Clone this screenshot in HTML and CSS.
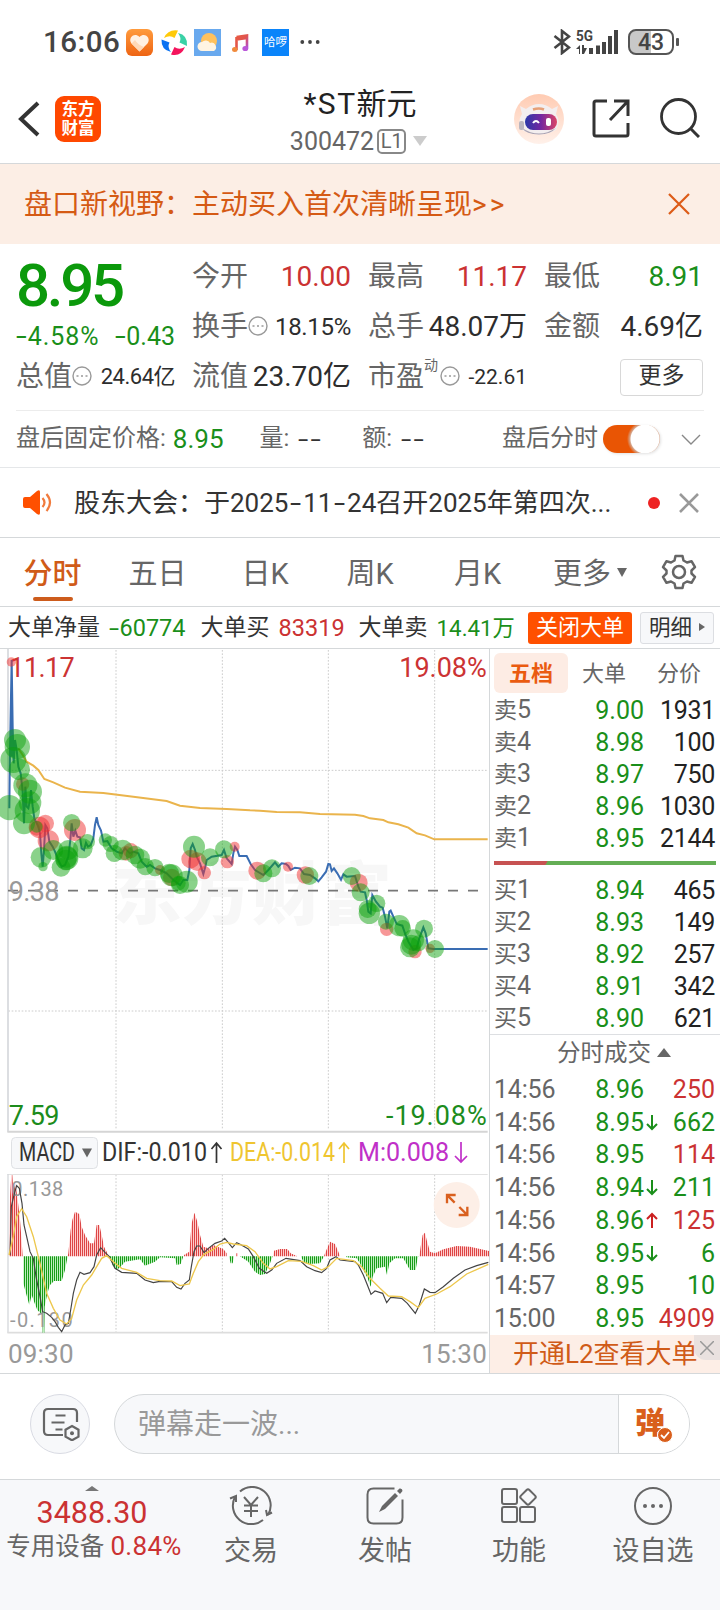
FILE: index.html
```html
<!DOCTYPE html>
<html lang="zh-CN">
<head>
<meta charset="utf-8">
<title>*ST新元 300472</title>
<link rel="stylesheet" href="styles.css">
</head>
<body>
<div class="app">
  <div class="status">
    <span class="clock">16:06</span>
    <svg class="app-ic" viewBox="0 0 27 27"><defs><linearGradient id="heart" x1="0" y1="0" x2="0" y2="1"><stop offset="0" stop-color="#ff9b3d"/><stop offset="1" stop-color="#ee6413"/></linearGradient></defs><rect width="27" height="27" rx="6" fill="url(#heart)"/><path d="M13.500 22.500 5.500 14.500C1.500 9.500 8 2.500 13.500 8 19 2.500 25.500 9.500 21.500 14.500Z" fill="#fff1e3"/><path d="M13.500 22.500 5.500 14.500 9 11Q12 16 18 18Z" fill="#ffd9b8"/></svg>
    <svg class="app-ic ml8" viewBox="0 0 27 27"><path d="M3 9Q7 0 17 1.500L13.500 9Q9 5.500 3 9Z" fill="#ffca0a"/><path d="M17 4Q27 6 26 17L18.500 13.500Q21 9 17 4Z" fill="#3ad1a6"/><path d="M24 18Q20 28 10 25.500L13.500 18Q18 21.500 24 18Z" fill="#f4145c"/><path d="M10 23Q0 21 .5 10.500L8.500 13.500Q6 18 10 23Z" fill="#0b72f2"/></svg>
    <svg class="app-ic ml7" viewBox="0 0 27 27"><rect width="27" height="27" fill="#69a9ee"/><circle cx="15" cy="12" r="8" fill="#ffc15c"/><path d="M8 22a4.500 4.500 0 0 1 0-9 5 5 0 0 1 8 1 4.500 4.500 0 0 1 4 8Z" fill="#fff4e2"/></svg>
    <svg class="app-ic ml7" viewBox="0 0 27 27"><defs><linearGradient id="note" x1="0" y1="0" x2="1" y2="1"><stop offset="0" stop-color="#e85a42"/><stop offset=".5" stop-color="#e0544f"/><stop offset="1" stop-color="#a94fe0"/></linearGradient></defs><path d="M9.500 8 20 6.500V19.500M9.500 8V21M9.500 10.500 20 9" fill="none" stroke="url(#note)" stroke-width="2.600"/><ellipse cx="7.800" cy="20.500" rx="2.800" ry="2.500" fill="#f08a3c"/><ellipse cx="18.300" cy="19.500" rx="2.900" ry="2.600" fill="#b957d9"/></svg>
    <span class="hello">哈啰</span>
    <svg class="dots" viewBox="0 0 20 6"><circle cx="2.300" cy="3" r="1.900"/><circle cx="10" cy="3" r="1.900"/><circle cx="17.700" cy="3" r="1.900"/></svg>
    <span class="grow"></span>
    <svg class="bt" viewBox="0 0 18 26"><path d="M1.500 7 16 18.500 9 24V2l7 5.500L1.500 19" fill="none" stroke="#444" stroke-width="2.600"/></svg>
    <svg class="signal" viewBox="0 -4 43 34"><text x="0" y="11.500" font-size="15" font-weight="700" textLength="17" lengthAdjust="spacingAndGlyphs">5G</text><path d="M4 16v9H3v-5H0zM6 16h2v3h3l-3 6H6z"/><path d="M13 19h4v6h-4zM20 16.500h4V25h-4zM26 13h4v12h-4zM32 7h4v18h-4zM38 1h4v24h-4z"/></svg>
    <span class="battery">43</span><i class="nub"></i>
  </div>

  <header class="nav">
    <svg class="back" viewBox="0 0 22 36"><path d="M20 2 3 18l17 16" fill="none" stroke="#333" stroke-width="4"/></svg>
    <div class="brand"><span>东方</span><span>财富</span></div>
    <div class="title">
      <div class="name"><span class="st">*ST</span>新元</div>
      <div class="code">300472<span class="lv">L1</span><i class="tri-down"></i></div>
    </div>
    <svg class="robot" viewBox="0 0 50 50"><defs><linearGradient id="halo" x1="0" y1="0" x2="0" y2="1"><stop offset="0" stop-color="#ffcbb2"/><stop offset="1" stop-color="#fff1ea"/></linearGradient><linearGradient id="visor"><stop offset="0" stop-color="#2a38a8"/><stop offset=".5" stop-color="#7426a0"/><stop offset="1" stop-color="#dc4465"/></linearGradient></defs><circle cx="25" cy="25" r="25" fill="url(#halo)"/><path d="M6 12 12 15Q25 5 38 15l6-3-2 8Q47 27 42 36 25 45 8 36 3 27 8 20Z" fill="#f3eeef"/><path d="M8 34q17 11 34 0-5 6-17 6.500Q12 40 8 34Z" fill="#aaa3b2"/><path d="M19 15.500q6-2 11 0" stroke="#e6a078" stroke-width="2.500" fill="none"/><rect x="5" y="27" width="5" height="9" rx="2" fill="#bbb6bf"/><rect x="11" y="20" width="32" height="16" rx="8" fill="url(#visor)"/><path d="M19 29q3-4 6 0" fill="none" stroke="#fff" stroke-width="2"/><rect x="32" y="24" width="5" height="8" rx="2" fill="#fff"/></svg>
    <svg class="share" viewBox="0 0 38 39"><path d="M15 2H4Q2 2 2 4V35Q2 37 4 37H34Q36 37 36 35V24M22 2H36V17M36 2 18 21" fill="none" stroke="#333" stroke-width="3"/></svg>
    <svg class="search" viewBox="0 0 40 40"><circle cx="18.500" cy="18.500" r="17" fill="none" stroke="#333" stroke-width="2.800"/><path d="m30 30 9 9" stroke="#333" stroke-width="3"/></svg>
  </header>

  <div class="promo"><span>盘口新视野：主动买入首次清晰呈现<span class="gt">&gt;&gt;</span></span>
    <svg viewBox="0 0 22 22"><path d="m1 1 20 20M21 1 1 21" stroke="#dd5b17" stroke-width="2.200"/></svg>
  </div>

  <section class="quote">
    <div class="q-grid">
      <div class="price-box"><div class="price">8.95</div><div class="chg"><span class="pct"><i class="dash">-</i>4.58%</span><span><i class="dash">-</i>0.43</span></div></div>
      <div class="cell"><span>今开</span><b class="red">10.00</b></div>
      <div class="cell"><span>最高</span><b class="red">11.17</b></div>
      <div class="cell"><span>最低</span><b class="green">8.91</b></div>
      <div class="cell"><span>换手<svg class="info" viewBox="0 0 20 20"><circle cx="10" cy="10" r="9"/><path d="M4.500 10h2m2.500 0h2m2.500 0h2"/></svg></span><b class="s24">18.15%</b></div>
      <div class="cell"><span>总手</span><b>48.07万</b></div>
      <div class="cell"><span>金额</span><b>4.69亿</b></div>
      <div class="cell"><span>总值<svg class="info" viewBox="0 0 20 20"><circle cx="10" cy="10" r="9"/><path d="M4.500 10h2m2.500 0h2m2.500 0h2"/></svg></span><b class="s22">24.64亿</b></div>
      <div class="cell"><span>流值</span><b>23.70亿</b></div>
      <div class="cell"><span>市盈<sup>动</sup><svg class="info" viewBox="0 0 20 20"><circle cx="10" cy="10" r="9"/><path d="M4.500 10h2m2.500 0h2m2.500 0h2"/></svg></span><b class="s21">-22.61</b></div>
      <div class="cell end"><span class="more-btn">更多</span></div>
    </div>
    <div class="after">
      <span>盘后固定价格:</span><b class="green">8.95</b>
      <span class="vol">量:</span><em>--</em>
      <span class="amt">额:</span><em>--</em>
      <span class="grow"></span>
      <span>盘后分时</span><span class="toggle"></span>
      <svg class="chev" viewBox="0 0 20 11"><path d="m1 1 9 9 9-9" fill="none" stroke="#888" stroke-width="1.400"/></svg>
    </div>
  </section>

  <div class="news">
    <svg class="horn" viewBox="0 0 30 25"><path d="M1 9q0-2 2-2h5l7-6q3-2 3 1v21q0 3-3 1l-7-6H3q-2 0-2-2Z" fill="#ff5000"/><path d="M20.500 8q4 4.500 0 9M24.500 4q7 8.500 0 17" fill="none" stroke="#f17b3d" stroke-width="2.200"/></svg>
    <span class="news-t">股东大会：于2025<i class="dash nd">-</i>11<i class="dash nd">-</i>24召开2025年第四次...</span>
    <i class="red-dot"></i>
    <svg class="news-x" viewBox="0 0 20 20"><path d="m1 1 18 18M19 1 1 19" stroke="#999" stroke-width="2.600"/></svg>
  </div>

  <nav class="tabs">
    <span class="on">分时</span><span>五日</span><span>日K</span><span>周K</span><span>月K</span><span class="more">更多<i class="tri-s"></i></span>
    <svg viewBox="0 0 36 36"><path d="M14.500 2h7l1 4.500 3.500 2 4.500-1.300 3.500 6-3.500 3.300v3l3.500 3.300-3.500 6-4.500-1.300-3.500 2-1 4.500h-7l-1-4.500-3.500-2-4.500 1.300-3.500-6L5.500 19.500v-3L2 13.200l3.500-6L10 8.500l3.500-2Z" fill="none" stroke="#666" stroke-width="2.500" stroke-linejoin="round"/><circle cx="18" cy="18" r="6" fill="none" stroke="#666" stroke-width="2.500"/></svg>
  </nav>

  <div class="orders">
    <span>大单净量</span><b class="green"><i class="dash">-</i>60774</b>
    <span class="o2">大单买</span><b class="red">83319</b>
    <span class="o3">大单卖</span><b class="green sell">14.41万</b>
    <span class="grow"></span>
    <span class="btn-close">关闭大单</span><span class="btn-more">明细<i class="tri-r"></i></span>
  </div>

  <main class="main">
    <div class="charts">
      <svg class="price-chart" viewBox="0 27 1467 1452">
        <text class="mark" x="335" y="838" font-size="205" textLength="840" lengthAdjust="spacingAndGlyphs">东方财富</text>
        <g fill="none" stroke="#ccc" stroke-width="3" stroke-dasharray="5 5"><path d="M348 30V1470M667 30V1470M985 30V1470M1304 30V1470M25 391H1463M25 1113H1463"/></g>
        <path d="M24 27V1475" stroke="#d5d8dc" stroke-width="5"/><path d="M22 1475H1463" stroke="#d5d5d5" stroke-width="6"/>
        <path d="M24 752H1440" stroke="#777" stroke-width="5" stroke-dasharray="30 30"/>
        <g font-size="81"><text x="28" y="110" fill="#cc3333" textLength="196">11.17</text><text x="1460" y="110" fill="#cc3333" text-anchor="end" textLength="262">19.08%</text><text x="26" y="782" fill="#999" textLength="152">9.38</text><text x="26" y="1455" fill="#1c8c1c" textLength="152">7.59</text><text x="1460" y="1455" fill="#1c8c1c" text-anchor="end" textLength="302">-19.08%</text></g>
        <polyline fill="none" stroke="#eab44c" stroke-width="6" points="55,325 68,345 80,365 100,377 115,390 133,417 160,427 195,443 240,455 310,459 400,470 500,483 540,497 600,504 680,507 750,511 780,512 830,516 900,517 960,522 1065,524 1090,528 1110,535 1150,540 1165,547 1195,553 1225,563 1250,580 1275,586 1303,598 1463,598"/>
        <polyline fill="none" stroke="#3a6db3" stroke-width="6" points="28,505 30,330 35,60 38,260 41,370 45,300 50,330 55,380 62,400 68,455 72,550 76,440 80,500 85,505 90,480 93,450 98,500 103,535 115,560 120,580 124,640 128,680 132,630 136,555 142,565 148,605 158,620 165,635 175,660 185,680 195,675 205,650 211,600 215,550 220,590 226,572 232,590 240,592 245,625 252,630 258,608 264,620 272,615 280,595 285,555 290,532 295,555 303,572 310,605 322,603 335,625 350,635 365,640 375,625 390,640 400,635 415,640 425,665 440,680 450,675 465,685 480,690 500,700 520,720 540,735 550,720 562,720 568,690 572,625 578,612 585,630 590,650 600,670 610,702 616,680 620,660 635,650 665,645 672,630 680,655 695,672 700,640 705,620 712,630 718,648 740,648 752,672 765,690 790,705 805,690 818,675 825,667 835,680 845,670 858,672 865,678 872,690 885,683 900,685 912,702 930,705 945,715 955,724 965,712 978,695 985,672 990,673 995,693 1002,685 1012,700 1023,719 1030,703 1040,710 1065,708 1075,740 1082,755 1095,757 1100,780 1105,815 1112,820 1117,765 1128,785 1140,800 1148,803 1155,830 1162,865 1168,815 1172,812 1180,830 1190,852 1207,857 1215,880 1225,905 1240,930 1250,925 1258,895 1270,862 1277,880 1285,925 1300,927 1463,927"/>
        <path d="M31 350 35 60 40 350Z" fill="#3a6db3"/>
        <g fill="#f03030" fill-opacity=".5"><circle cx="34" cy="66" r="14"/><circle cx="68" cy="432" r="20"/><circle cx="118" cy="562" r="32"/><circle cx="136" cy="550" r="26"/><circle cx="110" cy="565" r="22"/><circle cx="145" cy="602" r="32"/><circle cx="225" cy="570" r="33"/><circle cx="378" cy="640" r="22"/><circle cx="392" cy="632" r="23"/><circle cx="480" cy="690" r="15"/><circle cx="515" cy="712" r="26"/><circle cx="572" cy="657" r="28"/><circle cx="592" cy="665" r="28"/><circle cx="613" cy="698" r="20"/><circle cx="682" cy="665" r="20"/><circle cx="704" cy="620" r="15"/><circle cx="772" cy="692" r="27"/><circle cx="864" cy="680" r="15"/><circle cx="916" cy="705" r="26"/><circle cx="1076" cy="728" r="27"/><circle cx="1160" cy="868" r="20"/><circle cx="1245" cy="935" r="20"/><circle cx="1290" cy="925" r="14"/></g>
        <g fill="#0aa00a" fill-opacity=".48"><circle cx="45" cy="300" r="33"/><circle cx="52" cy="320" r="38"/><circle cx="40" cy="360" r="39"/><circle cx="58" cy="388" r="32"/><circle cx="76" cy="436" r="36"/><circle cx="90" cy="455" r="36"/><circle cx="28" cy="503" r="38"/><circle cx="72" cy="550" r="33"/><circle cx="90" cy="488" r="34"/><circle cx="82" cy="512" r="38"/><circle cx="110" cy="560" r="18"/><circle cx="123" cy="652" r="31"/><circle cx="129" cy="680" r="14"/><circle cx="160" cy="630" r="30"/><circle cx="183" cy="682" r="28"/><circle cx="200" cy="655" r="35"/><circle cx="198" cy="660" r="31"/><circle cx="200" cy="650" r="33"/><circle cx="205" cy="630" r="30"/><circle cx="215" cy="548" r="26"/><circle cx="248" cy="625" r="30"/><circle cx="262" cy="605" r="23"/><circle cx="316" cy="600" r="20"/><circle cx="332" cy="612" r="24"/><circle cx="343" cy="640" r="26"/><circle cx="368" cy="630" r="31"/><circle cx="405" cy="645" r="28"/><circle cx="420" cy="656" r="30"/><circle cx="436" cy="680" r="26"/><circle cx="465" cy="683" r="26"/><circle cx="508" cy="700" r="29"/><circle cx="515" cy="706" r="33"/><circle cx="540" cy="735" r="27"/><circle cx="535" cy="730" r="22"/><circle cx="560" cy="725" r="33"/><circle cx="582" cy="620" r="33"/><circle cx="630" cy="652" r="27"/><circle cx="672" cy="628" r="27"/><circle cx="790" cy="700" r="27"/><circle cx="816" cy="685" r="27"/><circle cx="928" cy="708" r="27"/><circle cx="1055" cy="708" r="27"/><circle cx="1082" cy="757" r="27"/><circle cx="1108" cy="820" r="32"/><circle cx="1103" cy="807" r="27"/><circle cx="1130" cy="790" r="26"/><circle cx="1158" cy="845" r="24"/><circle cx="1198" cy="857" r="32"/><circle cx="1208" cy="865" r="25"/><circle cx="1230" cy="922" r="30"/><circle cx="1234" cy="914" r="30"/><circle cx="1240" cy="900" r="32"/><circle cx="1256" cy="910" r="24"/><circle cx="1272" cy="866" r="27"/><circle cx="1305" cy="927" r="27"/></g>
      </svg>
      <svg class="legend" viewBox="0 0 489 41">
        <rect x="11.500" y="4.500" width="86" height="31" rx="4" fill="#f7f8fa" stroke="#dfe1e4"/>
        <g font-size="25"><text x="19" y="27.500" fill="#333" textLength="56" lengthAdjust="spacingAndGlyphs">MACD</text><text x="102" y="27.500" fill="#333" textLength="105" lengthAdjust="spacingAndGlyphs">DIF:-0.010</text><text x="230" y="27.500" fill="#efc530" textLength="105" lengthAdjust="spacingAndGlyphs">DEA:-0.014</text><text x="358" y="27.500" fill="#c030c8" textLength="91" lengthAdjust="spacingAndGlyphs">M:0.008</text></g>
        <path d="M82 15.500h10l-5 9z" fill="#666"/>
        <g fill="none" stroke-width="1.700"><path d="M216.500 30V10m-5 6 5-6 5 6" stroke="#333"/><path d="M344 30V10m-5 6 5-6 5 6" stroke="#efc530"/><path d="M461 9v20m-6-6 6 6 6-6" stroke="#c030c8"/></g>
      </svg>
      <svg class="macd" viewBox="0 162 1467 480">
        <defs><pattern id="up" width="6" height="12" patternUnits="userSpaceOnUse"><rect width="6" height="12" fill="#ffcccc"/><rect width="3" height="12" fill="#dc4545"/></pattern><pattern id="dn" width="6" height="12" patternUnits="userSpaceOnUse"><rect width="6" height="12" fill="#bdeebd"/><rect width="3" height="12" fill="#189c18"/></pattern></defs>
        <path d="M348 164V636M667 164V636M985 164V636M1304 164V636" stroke="#ccc" stroke-width="3" stroke-dasharray="5 5"/>
        <path d="M22 163H1463" stroke="#ddd" stroke-width="3"/><path d="M24 162V638" stroke="#d5d8dc" stroke-width="4"/><path d="M22 638H1463" stroke="#ddd" stroke-width="5"/>
        <path fill="url(#up)" d="M27 409 30 230 34 165H37L40 215 46 190 52 230 56 265 60 300 64 350 68 409ZM203 409 205 400 212 330 217 300 225 275 238 282 245 320 255 345 270 370H282L290 315H298L305 345 312 380 320 395 325 409ZM552 409V405L568 395 575 310 583 278 592 305 600 345 610 380 625 385 640 375 670 387 680 400V409ZM709 409V400H714V409ZM820 409 822 392 840 387H862L872 400 892 409ZM972 409 975 400 990 365 1005 372 1015 395 1020 409ZM1258 409 1262 380 1268 345 1275 338 1280 360 1290 395 1305 400 1330 388 1370 378 1410 380 1467 393V409Z"/>
        <path fill="url(#dn)" d="M70 409V490L78 520 88 555 95 525 104 550 112 570 122 580 127 580 128 638H133L134 560 142 520 150 495 162 483H185L195 450 203 409ZM327 409 340 440 350 450 362 440 375 425 420 418 435 437 465 425 480 412 525 415 530 435 542 432 550 409ZM687 409 692 430H698L702 409ZM720 409 745 425 765 455 780 465 795 462 810 430 818 409ZM903 409 910 425 925 432 960 430 972 409ZM1038 409 1040 412 1070 415 1080 430 1090 450 1103 475 1112 500 1118 470 1130 445 1155 440 1161 465 1168 430 1185 415H1210L1230 450H1247L1252 420 1255 409Z"/>
        <g font-size="60" fill="#999"><text x="34" y="228" textLength="156">0.138</text><text x="30" y="622" textLength="188">-0.130</text></g>
        <polyline fill="none" stroke="#444" stroke-width="3.500" points="30,405 34,260 42,225 50,197 58,205 66,250 72,315 80,350 90,395 100,415 108,470 120,530 128,575 140,580 155,592 165,605 175,622 185,635 195,615 205,610 212,570 220,520 230,480 240,457 252,463 270,458 282,440 290,405 302,383 315,397 328,410 345,445 365,457 410,460 435,480 460,488 480,484 515,485 530,502 543,507 555,490 568,480 574,440 582,395 590,378 600,378 612,398 625,385 645,370 665,363 674,355 685,368 697,383 710,368 720,373 745,387 760,410 778,445 800,460 815,450 830,430 858,415 900,422 920,440 945,452 965,458 980,445 990,420 1008,410 1020,420 1065,425 1075,435 1090,465 1100,490 1113,523 1125,513 1148,520 1160,548 1172,532 1205,535 1222,550 1246,580 1258,555 1273,507 1290,517 1305,518 1330,500 1360,475 1395,450 1430,437 1465,427"/>
        <polyline fill="none" stroke="#edc74c" stroke-width="4" points="27,405 40,350 50,290 65,266 80,290 100,350 120,430 140,520 160,565 180,600 200,612 215,595 230,540 250,495 275,465 290,440 305,415 320,407 340,425 365,445 410,457 440,475 480,482 515,483 540,497 568,492 580,460 595,425 612,403 640,388 660,372 680,367 700,372 740,377 765,395 790,430 810,447 830,440 865,422 905,424 940,437 965,450 985,440 1010,415 1060,422 1085,440 1110,475 1140,505 1165,528 1205,530 1230,545 1255,563 1275,535 1310,522 1350,500 1400,462 1465,433"/>
        <circle cx="1370" cy="255" r="69" fill="#fdefe7"/><path d="M1341 250V225H1367M1343 227 1364 248M1402 260V285H1376M1400 283 1378 261" fill="none" stroke="#d9601f" stroke-width="7"/>
      </svg>
      <div class="axis"><span>09:30</span><span>15:30</span></div>
    </div>

    <aside class="book">
      <div class="b-tabs"><span class="on">五档</span><span>大单</span><span>分价</span></div>
      <div class="lvls">
        <div><span>卖<em>5</em></span><b>9.00</b><i>1931</i></div>
        <div><span>卖<em>4</em></span><b>8.98</b><i>100</i></div>
        <div><span>卖<em>3</em></span><b>8.97</b><i>750</i></div>
        <div><span>卖<em>2</em></span><b>8.96</b><i>1030</i></div>
        <div><span>卖<em>1</em></span><b>8.95</b><i>2144</i></div>
      </div>
      <div class="ratio"><i></i></div>
      <div class="lvls">
        <div><span>买<em>1</em></span><b>8.94</b><i>465</i></div>
        <div><span>买<em>2</em></span><b>8.93</b><i>149</i></div>
        <div><span>买<em>3</em></span><b>8.92</b><i>257</i></div>
        <div><span>买<em>4</em></span><b>8.91</b><i>342</i></div>
        <div><span>买<em>5</em></span><b>8.90</b><i>621</i></div>
      </div>
      <div class="t-head">分时成交<i class="tri-up"></i></div>
      <div class="trades">
        <div><span>14:56</span><b>8.96</b><u></u><i class="red">250</i></div>
        <div><span>14:56</span><b>8.95</b><u><svg viewBox="0 0 12 17"><path d="M6 1v14M1 10l5 5 5-5"/></svg></u><i class="green">662</i></div>
        <div><span>14:56</span><b>8.95</b><u></u><i class="red">114</i></div>
        <div><span>14:56</span><b>8.94</b><u><svg viewBox="0 0 12 17"><path d="M6 1v14M1 10l5 5 5-5"/></svg></u><i class="green">211</i></div>
        <div><span>14:56</span><b>8.96</b><u><svg class="rise" viewBox="0 0 12 17"><path d="M6 16V2M1 7l5-5 5 5"/></svg></u><i class="red">125</i></div>
        <div><span>14:56</span><b>8.95</b><u><svg viewBox="0 0 12 17"><path d="M6 1v14M1 10l5 5 5-5"/></svg></u><i class="green">6</i></div>
        <div><span>14:57</span><b>8.95</b><u></u><i class="green">10</i></div>
        <div><span>15:00</span><b>8.95</b><u></u><i class="red">4909</i></div>
      </div>
      <div class="l2">开通L2查看大单<span class="l2-x"><svg viewBox="0 0 14 14"><path d="m0 0 14 14M14 0 0 14" stroke="#999" stroke-width="1.500"/></svg></span></div>
    </aside>
  </main>

  <div class="chat">
    <span class="round"><svg viewBox="0 0 38 34"><path d="M35 15V6q0-4-4-4H6Q2 2 2 6V24q0 4 4 4H21M13.500 8.500h10M9.500 15.500h13M13.500 22.500h7" fill="none" stroke="#666" stroke-width="2.200"/><path d="m30 19 6.500 3.700v7L30 33.300l-6.500-3.600v-7Z" fill="#f7f8fa" stroke="#666" stroke-width="2.200"/><circle cx="30" cy="26.300" r="2" fill="#666"/></svg></span>
    <div class="input"><span class="ph">弹幕走一波...</span><span class="dan">弹<svg viewBox="0 0 16 16"><circle cx="8" cy="8" r="7.500" fill="#d95f1c" stroke="#fff"/><path d="m4 8 3 3 5-6" fill="none" stroke="#fff" stroke-width="1.800"/></svg></span></div>
  </div>

  <footer class="foot">
    <div class="index"><i class="tri-flat"></i><b>3488.30</b><span>专用设备 <em>0.84%</em></span></div>
    <div class="item"><svg viewBox="0 0 44 40"><g fill="none" stroke="#666" stroke-width="2"><path d="M11 5.500A18.500 18.500 0 0 1 39 29M34 34A18.500 18.500 0 0 1 6 11M1 12.500 7 10v6M43 26.500 38 29l-1-5M15 11l7 8 7-8M22 19v12M15 19.500h14M15 25h14"/></g></svg><span>交易</span></div>
    <div class="item"><svg viewBox="0 0 44 40"><path d="M31 3H10q-6 0-6 6v23q0 6 6 6h23q6 0 6-6V14" transform="translate(.5 -.5)" fill="none" stroke="#666" stroke-width="2"/><path d="m16 26 3-6L32 7l3 3-13 13Z" fill="#666"/><path d="m34 5 2.500-2.500q3-.5 3 2.500L37 8Z" fill="#666"/></svg><span>发帖</span></div>
    <div class="item"><svg viewBox="0 0 44 40"><g fill="none" stroke="#666" stroke-width="2"><rect x="5" y="3" width="15" height="15" rx="2"/><rect x="5" y="21" width="15" height="15" rx="2"/><rect x="23" y="21" width="15" height="15" rx="2"/><rect x="25" y="5" width="12" height="12" rx="2" transform="rotate(45 31 11)"/></g></svg><span>功能</span></div>
    <div class="item"><svg viewBox="0 0 44 40"><circle cx="22" cy="20" r="18" fill="none" stroke="#666" stroke-width="2"/><g fill="#666"><circle cx="14" cy="20" r="2"/><circle cx="22" cy="20" r="2"/><circle cx="30" cy="20" r="2"/></g></svg><span>设自选</span></div>
  </footer>
</div>
</body>
</html>
```
FILE: styles.css
```css
* { box-sizing: border-box; }
body { margin: 0; background: #fff; }
.app { width: 720px; height: 1610px; overflow: hidden; background: #fff; color: #333; font-family: Roboto, "Noto Sans CJK SC", sans-serif; }
svg { display: block; flex: none; }
b, i, em, u { font-weight: 400; font-style: normal; text-decoration: none; }
.grow { flex: 1; }
.red, .index b, .index em { color: #cb3232; }
.green { color: #1a8f1a; }
.dash { display: inline-block; transform: scaleX(1.550); transform-origin: left; margin-right: 4px; }
.nd { margin: 0 5.500px 0 2px; }

.status { display: flex; align-items: center; height: 84px; padding: 0 41px 0 43px; }
.clock { width: 83px; font-size: 29.5px; font-weight: 500; color: #444; letter-spacing: .5px; }
.app-ic { width: 27px; height: 27px; }
.ml8 { margin-left: 8px; }
.ml7 { margin-left: 6px; }
.hello { width: 27px; height: 27px; margin-left: 8px; background: #0a84fa; color: #fff; font-size: 11.500px; line-height: 27px; text-align: center; }
.dots { width: 20px; height: 6px; margin-left: 11px; fill: #444; }
.bt { width: 18px; height: 26px; }
.signal { width: 43px; height: 34px; margin: 0 9px 0 5px; fill: #444; }
.battery { width: 46px; height: 26px; border: 2px solid #555; border-radius: 8px; background: linear-gradient(90deg, #c8c8c8 49%, #fff 49%); font-size: 23px; font-weight: 500; line-height: 23px; text-align: center; color: #444; }
.nub { width: 3px; height: 8px; margin-left: 2px; background: #555; border-radius: 1px; }

.nav { display: flex; align-items: flex-start; height: 80px; border-bottom: 1px solid #d5d8da; }
.back { width: 22px; height: 36px; margin: 17px 0 0 18px; }
.brand { display: flex; flex-direction: column; width: 46px; height: 46px; margin: 12px 0 0 15px; padding-top: 4px; background: #ff4800; border-radius: 9px; color: #fff; font-size: 16.500px; font-weight: 700; line-height: 19px; text-align: center; }
.title { width: 160px; margin-left: 179px; text-align: center; }
.name { height: 38px; font-size: 30px; line-height: 40px; color: #222; }
.st { letter-spacing: 1.500px; }
.code { display: flex; justify-content: center; align-items: center; height: 38px; margin-left: -3px; font-size: 25px; color: #666; }
.lv { width: 29px; height: 25px; margin-left: 3px; border: 2px solid #888; border-radius: 5px; font-size: 20px; line-height: 21px; text-align: center; }
.tri-down { margin-left: 7px; border: 7px solid transparent; border-top: 10px solid #ccc; border-bottom: 0; }
.robot { width: 50px; height: 50px; margin: 10px 0 0 74px; }
.share { width: 38px; height: 39px; margin: 15px 0 0 28px; }
.search { width: 40px; height: 40px; margin: 14px 0 0 30px; }

.promo { display: flex; justify-content: space-between; align-items: center; height: 80px; padding: 0 30px 0 24px; background: #fceee5; color: #d55a14; font-size: 28px; line-height: 40px; }
.promo > span { padding-top: 2px; }
.gt { letter-spacing: 3px; }
.promo svg { width: 22px; height: 22px; }

.quote { height: 224px; border-bottom: 1px solid #e5e7e9; }
.q-grid { display: grid; grid-template-columns: repeat(4, 159px); grid-template-rows: 50px 50px 50px; column-gap: 17px; height: 167px; padding-top: 8px; margin: 0 16px; border-bottom: 1px solid #ececec; }
.price-box { grid-row: 1 / 3; }
.price { height: 68px; font-size: 60px; font-weight: 500; line-height: 68px; letter-spacing: -3.300px; color: #0b990b; }
.chg { display: flex; justify-content: space-between; font-size: 25px; line-height: 33px; color: #1a8f1a; }
.pct { letter-spacing: .9px; }
.cell { display: flex; justify-content: space-between; align-items: center; white-space: nowrap; font-size: 28px; line-height: 40px; color: #666; }
.cell span { display: flex; align-items: center; padding-bottom: 1px; }
.cell b { font-size: 28px; color: #2d2d2d; }
.cell b.red { color: #cb3232; }
.cell b.green { color: #1a8f1a; }
.cell b.s24 { font-size: 24px; letter-spacing: -.3px; }
.cell b.s22 { font-size: 22px; letter-spacing: -.5px; }
.cell b.s21 { font-size: 21px; }
.cell sup { align-self: flex-start; width: 16px; margin-top: 1px; font-size: 14px; line-height: 14px; }
.info { width: 20px; height: 20px; margin-top: -2px; fill: none; stroke: #999; stroke-width: 1.400; }
.end { justify-content: flex-end; }
.cell .more-btn { width: 83px; height: 37px; justify-content: center; padding-bottom: 2px; border: 1px solid #d8d8d8; border-radius: 4px; font-size: 23px; color: #333; }
.after { display: flex; align-items: center; height: 56px; padding: 0 19px 0 16px; font-size: 24px; line-height: 34px; color: #666; }
.after > span:not(.toggle) { padding-bottom: 3px; }
.after b { margin-left: 7px; font-size: 26px; }
.vol { margin-left: 36px; }
.amt { margin-left: 40px; }
.after em { width: 24px; margin-left: 9px; letter-spacing: 1.500px; transform: scaleX(1.550); transform-origin: left; color: #333; }
.toggle { width: 57px; height: 28px; margin: 0 21px 0 5px; border-radius: 14px; background: radial-gradient(circle at 42px 14px, #fff 14px, #d5a58b 15px, #e95504 18px); box-shadow: 1px 1px 3px rgba(0,0,0,.12); }
.chev { width: 20px; height: 11px; }

.news { display: flex; align-items: center; height: 70px; padding: 0 20px 0 22px; border-bottom: 1px solid #d5d8da; }
.horn { width: 30px; height: 25px; }
.news-t { width: 572px; margin-left: 22px; padding-bottom: 5px; font-size: 26px; white-space: nowrap; }
.red-dot { width: 12px; height: 12px; margin-left: 2px; border-radius: 50%; background: #ee2222; }
.news-x { width: 20px; height: 20px; margin-left: 19px; }

.tabs { display: grid; grid-template-columns: 105px 105px 110px 100px 115px 106px 1fr; align-items: center; height: 69px; border-bottom: 1px solid #d5d8da; font-size: 29px; color: #666; }
.tabs span { position: relative; height: 68px; line-height: 72px; text-align: center; white-space: nowrap; }
.tabs .on { color: #d05b18; font-weight: 500; }
.tabs .on::after { content: ""; position: absolute; left: 33px; top: 59px; width: 40px; height: 4px; border-radius: 3px; background: #cd5c1c; }
.tabs .more { padding-left: 4px; }
.tri-s { display: inline-block; margin: 0 0 7px 6px; border: 5px solid transparent; border-top: 9px solid #666; border-bottom: 0; }
.tabs svg { width: 36px; height: 36px; margin-left: 20px; }

.orders { display: flex; align-items: center; height: 42px; padding: 0 6px 0 8px; border-bottom: 1px solid #d5d8da; font-size: 23px; line-height: 36px; white-space: nowrap; }
.orders b { margin-left: 9px; padding-top: 1px; font-size: 23.500px; }
.orders .sell { font-size: 22.300px; }
.orders .o2 { margin-left: 15px; }
.orders .o3 { margin-left: 14px; }
.btn-close { width: 104px; height: 32px; border-radius: 3px; background: #ff5000; color: #fff; font-size: 22px; line-height: 31px; text-align: center; }
.btn-more { width: 74px; height: 32px; margin-left: 8px; padding-left: 8px; border: 1px solid #dcdee2; border-radius: 3px; background: #f7f8fa; font-size: 21.500px; line-height: 30px; }
.tri-r { display: inline-block; margin: 0 0 4px 7px; border: 4px solid transparent; border-left: 6px solid #666; border-right: 0; }

.main { display: flex; height: 725px; border-bottom: 1px solid #d5d8da; }
.charts { width: 489px; }
.price-chart { width: 489px; height: 484px; }
.mark { fill: #f7f7f7; font-weight: 900; }
.legend { width: 489px; height: 41px; }
.macd { width: 489px; height: 160px; }
.axis { display: flex; justify-content: space-between; padding: 0 2px 0 8px; font-size: 26px; line-height: 40px; letter-spacing: .2px; color: #999; }

.book { width: 231px; border-left: 1px solid #d5d8da; }
.b-tabs { display: grid; grid-template-columns: 74px 74px 74px; height: 45px; padding: 4px 0 0 4px; font-size: 22px; line-height: 42px; text-align: center; color: #666; }
.b-tabs .on { height: 40px; border-radius: 6px; background: #fdece4; color: #ea5b10; font-weight: 700; }
.b-tabs span:nth-child(2) { padding-right: 2px; }
.lvls { padding: 0 5px 0 4px; }
.lvls div { display: grid; grid-template-columns: 60px 90px 1fr; align-items: center; height: 32px; font-size: 25px; line-height: 32px; text-align: right; }
.lvls span { padding-bottom: 1px; font-size: 23px; text-align: left; color: #666; }
.lvls em { font-size: 25px; }
.lvls b, .trades b { color: #1a8f1a; }
.lvls i { color: #222; letter-spacing: -.3px; }
.ratio { height: 20px; padding: 7px 4px 9px; }
.ratio i { display: block; height: 4px; background: linear-gradient(120deg, #c75252 46px, #64ae55 47px); }
.t-head { display: flex; justify-content: center; align-items: center; height: 39px; padding: 0 0 3px 18px; border-top: 1px solid #dddfe2; font-size: 23.500px; line-height: 34px; color: #666; }
.tri-up { margin: 0 0 0 6px; border: 7px solid transparent; border-bottom: 9px solid #666; border-top: 0; }
.trades { padding: 0 5px 0 4px; }
.trades div { display: grid; grid-template-columns: 70px 80px 14px 1fr; align-items: center; height: 32.750px; font-size: 25px; text-align: right; }
.trades span { text-align: left; color: #666; letter-spacing: -.2px; }
.trades svg { width: 12px; height: 17px; margin-left: 2px; fill: none; stroke: #1a8f1a; stroke-width: 2; }
.trades .rise { stroke: #cb2020; }
.l2 { position: relative; height: 38px; padding-left: 23px; background: #fdeee6; color: #d05b18; font-size: 26px; line-height: 38px; white-space: nowrap; }
.l2-x { position: absolute; right: 0; top: 0; display: grid; place-items: center; width: 26px; height: 25px; border-radius: 0 0 0 12px; background: rgba(225,220,220,.75); }
.l2-x svg { width: 14px; height: 14px; }

.chat { display: flex; align-items: center; height: 106px; padding: 0 30px 6px; border-bottom: 1px solid #d5d8da; }
.round { display: grid; place-items: center; width: 60px; height: 60px; border: 1px solid #d9dbe3; border-radius: 50%; background: #f7f8fa; }
.round svg { width: 38px; height: 34px; margin-left: 2px; }
.input { display: flex; width: 576px; height: 60px; margin-left: 24px; border: 1px solid #d5d8da; border-radius: 30px; background: #f7f8fa; overflow: hidden; }
.ph { width: 504px; padding-left: 23px; border-right: 1px solid #d5d8da; font-size: 28px; line-height: 60px; color: #999; }
.dan { position: relative; flex: 1; padding-left: 16px; background: #fff; font-size: 30px; font-weight: 900; line-height: 56px; color: #d95f1c; }
.dan svg { position: absolute; left: 38px; top: 32px; width: 16px; height: 16px; }

.foot { display: grid; grid-template-columns: 184px repeat(4, 134px); height: 130px; background: #f7f8fa; color: #666; }
.index { display: flex; flex-direction: column; align-items: center; padding-top: 6px; white-space: nowrap; }
.tri-flat { border: 7px solid transparent; border-bottom: 5px solid #777; border-top: 0; }
.index b { font-size: 30.500px; line-height: 44px; }
.index span { margin-left: 4px; font-size: 24.500px; line-height: 23px; }
.index em { font-size: 26px; letter-spacing: .3px; }
.item { display: flex; flex-direction: column; align-items: center; padding-top: 6px; font-size: 27px; }
.item svg { width: 44px; height: 40px; }
.item span { line-height: 51px; }
```
